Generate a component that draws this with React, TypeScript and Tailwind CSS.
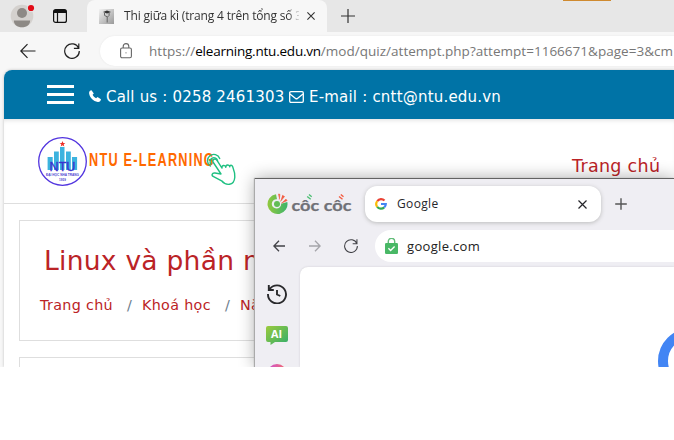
import React from "react";

const ui = "font-['Open_Sans','Noto_Sans',sans-serif]";
const verdana = "font-['DejaVu_Sans',sans-serif]";

function BackArrow({ className }: { className: string }) {
  return (
    <svg className={className} viewBox="0 0 16 16" fill="none" stroke="currentColor" strokeWidth="1.2">
      <path d="M15.5 8H1M7.5 1.2 .8 8l6.7 6.8" />
    </svg>
  );
}

function Reload({ className }: { className: string }) {
  return (
    <svg className={className} viewBox="0 0 16 16" fill="none" stroke="currentColor" strokeWidth="1.2">
      <path d="M14.7 5.2A7.3 7.3 0 1 0 15.3 8M14.8 .4v5H9.9" />
    </svg>
  );
}

function EdgeTabs() {
  return (
    <div className="flex h-8 shrink-0 items-start bg-[#e7e7e7]">
      <svg className="ml-[10px] mt-[4px] h-6 w-[25px] shrink-0" viewBox="0 0 25 24">
        <circle cx="12" cy="12" r="11.3" fill="#d4d1ce" />
        <circle cx="12" cy="9" r="5" fill="#8d8985" />
        <path d="M3.9 16.4h16.2c.2 4-3.5 6.8-8.1 6.8s-8.3-2.8-8.1-6.8Z" fill="#8d8985" />
        <circle cx="21" cy="4" r="3.8" fill="#e7e7e7" />
        <circle cx="21" cy="4" r="3.1" fill="#e20b17" />
      </svg>
      <svg className="ml-[18px] mt-[9px] h-[14px] w-[14px] shrink-0" viewBox="0 0 14 14" fill="none" stroke="#111">
        <rect x=".6" y=".6" width="12.8" height="12.8" rx="2" strokeWidth="1.2" />
        <path d="M1 2.5h12" strokeWidth="3" />
        <path d="M4.5 4v9.5" strokeWidth="1.2" />
      </svg>
      <div className="ml-5 flex h-8 w-[240px] shrink-0 items-center rounded-t-lg bg-[#f7f7f7]">
        <svg className="ml-3 h-[15px] w-[15px] shrink-0" viewBox="0 0 15 15">
          <defs>
            <linearGradient id="fav" x2="1" y2="1">
              <stop stopColor="#f2f2f2" />
              <stop offset="1" stopColor="#999" />
            </linearGradient>
          </defs>
          <rect width="15" height="15" fill="url(#fav)" />
          <path d="m4 3 4-1.4L12 3 8 4.6Z" fill="#333" />
          <path d="M5.5 4v2.4l3 1.6 1.6-1.6V4M8.2 8v5.5" fill="none" stroke="#666" />
        </svg>
        <div className={`ml-[10px] w-[175px] shrink-0 overflow-hidden whitespace-nowrap text-[12px] leading-5 tracking-[-0.17px] text-[#333] [mask-image:linear-gradient(to_right,black_164px,transparent_177px)] ${ui}`}>
          Thi giữa kì (trang 4 trên tổng số 3
        </div>
        <svg className="ml-[8px] h-2 w-2 shrink-0" viewBox="0 0 8 8" stroke="#333" strokeWidth="1.1">
          <path d="m.4.4 7.2 7.2m0-7.2L.4 7.6" />
        </svg>
      </div>
      <svg className="ml-[14px] mt-[9px] h-[14px] w-[14px] shrink-0" viewBox="0 0 14 14" stroke="#333" strokeWidth="1.2">
        <path d="M7 0v14M0 7h14" />
      </svg>
      <div className="ml-[208px] h-px w-12 shrink-0 bg-[#cf8a2f]" />
    </div>
  );
}

function EdgeToolbar() {
  return (
    <div className="flex h-[38px] shrink-0 items-start bg-[#f7f7f7] pl-5 text-[#222]">
      <BackArrow className="mt-[11px] h-4 w-4 shrink-0" />
      <Reload className="ml-7 mt-[11px] h-4 w-4 shrink-0" />
      <div className="ml-5 mt-1 flex h-[30px] w-[600px] shrink-0 items-center rounded-l-full bg-white shadow-[0_0_2px_#e5e5e5]">
        <svg className="ml-5 h-4 w-3 shrink-0" viewBox="0 0 12 16" fill="none" stroke="#666" strokeWidth="1.1">
          <rect x=".6" y="5" width="10.8" height="9.8" rx="1.5" />
          <path d="M3.2 5V3.4a2.8 2.8 0 0 1 5.6 0V5" />
          <circle cx="6" cy="9.8" r=".6" fill="#666" stroke="none" />
        </svg>
        <div className={`ml-[17px] whitespace-nowrap text-[13.5px] leading-5 tracking-[0.02px] text-[#777] ${ui}`}>
          https://<span className="tracking-[-0.22px] text-black">elearning.ntu.edu.vn</span>/mod/quiz/attempt.php?attempt=1166671&amp;page=3&amp;cm
        </div>
      </div>
    </div>
  );
}

function ContactBar() {
  return (
    <div className={`flex h-[49px] shrink-0 items-center rounded-tl-lg bg-[#0073a6] pl-[43px] text-[15px] text-white ${verdana}`}>
      <div className="flex w-[27px] shrink-0 flex-col gap-[5px]">
        <div className="h-[3px] bg-white" />
        <div className="h-[3px] bg-white" />
        <div className="h-[3px] bg-white" />
      </div>
      <svg className="ml-[15px] mt-[3px] h-3 w-3 shrink-0" viewBox="0 0 12 12" fill="white">
        <path d="M2.5.2 4.8 3.4 3.6 4.8c.7 1.5 1.9 2.8 3.5 3.5l1.4-1.2L12 9.3c-.2 1.7-1.4 2.8-3.2 2.6C4.2 11.1.8 7.8.1 3.2 0 1.5 1 .4 2.5.2Z" />
      </svg>
      <span className="ml-[5px] mt-[5px] w-[180px] shrink-0 whitespace-nowrap leading-5 tracking-[0.18px]">Call us : 0258 2461303</span>
      <svg className="ml-[3px] mt-[5px] h-3 w-[15px] shrink-0" viewBox="0 0 15 12" fill="none" stroke="white" strokeWidth="1.3">
        <rect x=".7" y=".7" width="13.6" height="10.6" rx="1.2" />
        <path d="m1 3.1 5.6 4.3q.9.7 1.8 0L14 3.1" />
      </svg>
      <span className="ml-[5px] mt-[5px] whitespace-nowrap leading-5 tracking-[0.2px]">E-mail : cntt@ntu.edu.vn</span>
    </div>
  );
}

function SchoolLogo() {
  return (
    <svg className="h-[54px] w-[200px] shrink-0" viewBox="0 0 200 54">
      <circle cx="24.5" cy="25.5" r="23.8" fill="white" stroke="#5134df" strokeWidth="1.3" />
      <path d="m24.5 5 .8 2h2.1l-1.7 1.3.6 2.1-1.8-1.2-1.8 1.2.6-2.1L21.6 7h2.1Z" fill="#ed3028" />
      <path d="M9.6 34V21h5.1v13ZM16 34V15.5h4.8V34ZM22 34V11h4.5v23ZM28 34V15.5h4.8V34ZM34 34V21h5.1v13Z" fill="#3cb3df" />
      <text x="11.5" y="35" textLength="26" lengthAdjust="spacingAndGlyphs" className="font-['Liberation_Sans',sans-serif] text-[13px]" fill="#3b32d0" stroke="#3b32d0" strokeWidth=".35">NTU</text>
      <text x="8" y="40.2" textLength="33" lengthAdjust="spacingAndGlyphs" className="font-['Liberation_Sans',sans-serif] text-[3.8px] font-bold" fill="#4b42d0">ĐẠI HỌC NHA TRANG</text>
      <text x="21" y="44.7" textLength="7" className="font-['Liberation_Sans',sans-serif] text-[3px] font-bold" fill="#4b42d0">1959</text>
      <text x="51" y="30.2" textLength="126" lengthAdjust="spacingAndGlyphs" className="font-['Liberation_Sans',sans-serif] text-[18.5px] font-bold tracking-[1.8px]" fill="#ff6900">NTU E-LEARNING</text>
      <g fill="none" stroke="#1fc082" strokeWidth="1.4" strokeLinecap="round" strokeLinejoin="round">
        <path d="m175 26 8 12-6-1c-3-.5-4 2.5-1.4 3.6l8 4.2c4 5 12.5 5.4 13.2-3.6.3-5-1-7.5-2.2-10.6-.8-2-3-1.6-2.8.3-.4-2.9-4.2-2.4-4 .4-.7-3-4.4-2-3.8.8l-5-7.8c-1.8-2.4-5-.8-4 1.7Z" />
        <path d="M173 28a3.8 3.8 0 1 1 6.6-3.2M172.3 30a6.3 6.3 0 1 1 9.4-7.4" />
      </g>
    </svg>
  );
}

function ElearningPage() {
  return (
    <div className={`ml-1 flex h-[297px] flex-col rounded-tl-lg bg-white shadow-[0_0_3px_#bdbdbd] ${verdana}`}>
      <ContactBar />
      <div className="flex h-[85px] shrink-0 border-b border-[#dedede] pl-[34px] pt-[17px] shadow-[inset_0_4px_5px_-3px_#ddd]">
        <SchoolLogo />
        <span className="ml-[334px] mt-[18px] whitespace-nowrap text-[17.5px] leading-6 tracking-[0.3px] text-[#bb2326]">Trang chủ</span>
      </div>
      <div className="ml-[15px] mt-4 h-[121px] shrink-0 border border-[#dedede] text-[#bb2326]">
        <h1 className="ml-6 mt-[22px] whitespace-nowrap text-[26.5px] leading-9 tracking-[0.26px]">Linux và phần mềm</h1>
        <div className="ml-5 mt-[16px] flex whitespace-nowrap text-[14.3px] leading-5 tracking-[0.34px]">
          <span className="w-[87px]">Trang chủ</span>
          <span className="w-[15px] text-[#6c7d8c]">/</span>
          <span className="w-[83px]">Khoá học</span>
          <span className="w-[15px] text-[#6c7d8c]">/</span>
          <span>Năm học</span>
        </div>
      </div>
      <div className="ml-[15px] mt-4 h-20 shrink-0 border border-[#dedede]" />
    </div>
  );
}

function CocCocBrand() {
  return (
    <svg className="ml-3 mt-3 h-[28px] w-[87px] shrink-0" viewBox="0 0 87 28">
      <defs>
        <linearGradient id="brand" x1="0" x2="1">
          <stop stopColor="#91c83e" />
          <stop offset="1" stopColor="#3eb46a" />
        </linearGradient>
      </defs>
      <path d="M9 3.2A10 10 0 1 0 20.3 11l-6.1 1.8A4.7 4.7 0 1 1 10 8.2Z" fill="url(#brand)" />
      <circle cx="10" cy="13" r="3" fill="#62bd56" />
      <path d="m11.2 3.2 1.7.1-.6 5.2M15.3 4.3l2.2 1.2-4.1 5M18.7 8l1.4 1.5-5.8 2.7" fill="#f35d42" stroke="#f35d42" strokeWidth=".7" />
      <text x="24.5" y="20.3" textLength="60" lengthAdjust="spacingAndGlyphs" className="font-['Lato',sans-serif] text-[16px] font-bold" fill="#707177" stroke="#707177" strokeWidth=".25">côc côc</text>
      <path d="m40.2 5.5 3.5 2.7M42 3.5l2.7 2.3" stroke="#4cbe73" strokeWidth="1.4" />
      <path d="m72 5.5 3.5 2.7M73.8 3.5l2.7 2.3" stroke="#f35d42" strokeWidth="1.4" />
    </svg>
  );
}

function CocCocWindow() {
  return (
    <div className={`absolute left-[255px] top-[178px] flex h-[189px] w-[419px] flex-col border-t border-[#636363] bg-[#efeef3] shadow-[-1px_0_1px_#aaa,0_0_16px_#0005] ${ui}`}>
      <div className="flex h-[51px] shrink-0">
        <CocCocBrand />
        <div className="ml-[11px] mt-[7px] flex h-9 w-[236px] shrink-0 items-center rounded-xl bg-white shadow-[0_1px_4px_#bbb]">
          <svg className="ml-[10px] h-3 w-3 shrink-0" viewBox="0 0 12 12" fill="none" strokeWidth="2.2">
            <path d="M2.3 3.1A4.7 4.7 0 0 1 9.5 2.6" stroke="#ea4335" />
            <path d="M2.3 3.1A4.7 4.7 0 0 0 2.2 8.8" stroke="#fbbc05" />
            <path d="M2.2 8.8A4.7 4.7 0 0 0 9.2 9.4" stroke="#34a853" />
            <path d="M9.2 9.4A4.6 4.6 0 0 0 10.8 6H6" stroke="#4285f4" />
          </svg>
          <span className="ml-[10px] w-[172px] text-[12px] leading-5 tracking-[0.35px] text-[#27272b]">Google</span>
          <svg className="ml-[9px] h-[9px] w-[9px] shrink-0" viewBox="0 0 9 9" stroke="#25252a" strokeWidth="1.2">
            <path d="m.5.5 8 8m0-8-8 8" />
          </svg>
        </div>
        <svg className="ml-[14px] mt-[19px] h-3 w-3 shrink-0" viewBox="0 0 12 12" stroke="#555" strokeWidth="1.4">
          <path d="M6 .2v11.6M.2 6h11.6" />
        </svg>
      </div>
      <div className="flex h-8 shrink-0 items-center pl-[18px] text-[#424247]">
        <svg className="h-3 w-3 shrink-0" viewBox="0 0 12 12" fill="none" stroke="currentColor" strokeWidth="1.3">
          <path d="M12 6H.9M6 .8.9 6 6 11.2" />
        </svg>
        <svg className="ml-6 h-3 w-3 shrink-0 text-[#a5a5aa]" viewBox="0 0 12 12" fill="none" stroke="currentColor" strokeWidth="1.3">
          <path d="M0 6h11.1M6 .8 11.1 6 6 11.2" />
        </svg>
        <Reload className="ml-[23px] h-[14px] w-[14px] shrink-0" />
        <div className="ml-[17px] flex h-8 flex-1 items-center rounded-l-full bg-white">
          <svg className="ml-[10px] h-4 w-[13px] shrink-0" viewBox="0 0 13 16" fill="none">
            <rect y="5" width="13" height="11" rx="1.3" fill="#49b866" />
            <path d="M3.3 5V3.5a3.2 3.2 0 0 1 6.4 0V5" stroke="#63bd79" strokeWidth="1.4" />
            <path d="m3.4 10.3 2.2 2.1 4-4" stroke="white" strokeWidth="1.4" />
          </svg>
          <span className="ml-[9px] text-[13px] leading-5 tracking-[0.33px] text-[#222]">google.com</span>
        </div>
      </div>
      <div className="flex min-h-0 flex-1">
        <div className="flex w-[45px] shrink-0 flex-col overflow-hidden">
          <svg className="ml-3 mt-[22px] h-5 w-5 shrink-0" viewBox="0 0 20 20" fill="none" stroke="#29292c" strokeWidth="1.9">
            <path d="M2.8 5A9 9 0 1 1 1 10M1.8 1v5h5M10 6v4.5l3.3 1.5" />
          </svg>
          <svg className="ml-[11px] mt-[22px] h-5 w-[22px] shrink-0" viewBox="0 0 22 20">
            <defs>
              <linearGradient id="chat" x2="1" y2="1">
                <stop stopColor="#9cca3d" />
                <stop offset="1" stopColor="#32ad6c" />
              </linearGradient>
            </defs>
            <path d="M2 0h18q2 0 2 2v12q0 2-2 2H9l-4.5 3V16H2q-2 0-2-2V2q0-2 2-2Z" fill="url(#chat)" />
            <text x="5" y="11.8" textLength="11" lengthAdjust="spacingAndGlyphs" className="font-['Open_Sans',sans-serif] text-[11px] font-bold" fill="white">AI</text>
          </svg>
          <div className="ml-3 mt-[18px] h-5 w-5 shrink-0 rounded-full bg-linear-to-r from-[#cc4ad3] to-[#f66a5f]" />
        </div>
        <div className="mt-[5px] flex flex-1 justify-end overflow-hidden rounded-tl-lg bg-white shadow-[0_0_2px_#c8c7cc]">
          <svg className="mt-[56px] h-11 w-4 shrink-0" viewBox="0 0 16 44">
            <circle cx="33" cy="38" r="28" fill="none" stroke="#4285f4" strokeWidth="10" />
          </svg>
        </div>
      </div>
    </div>
  );
}

export default function App() {
  return (
    <main className="h-[440px] w-[674px] overflow-hidden bg-white">
      <div className="relative h-[367px] overflow-hidden bg-[#f7f7f7]">
        <EdgeTabs />
        <EdgeToolbar />
        <ElearningPage />
        <CocCocWindow />
      </div>
    </main>
  );
}
